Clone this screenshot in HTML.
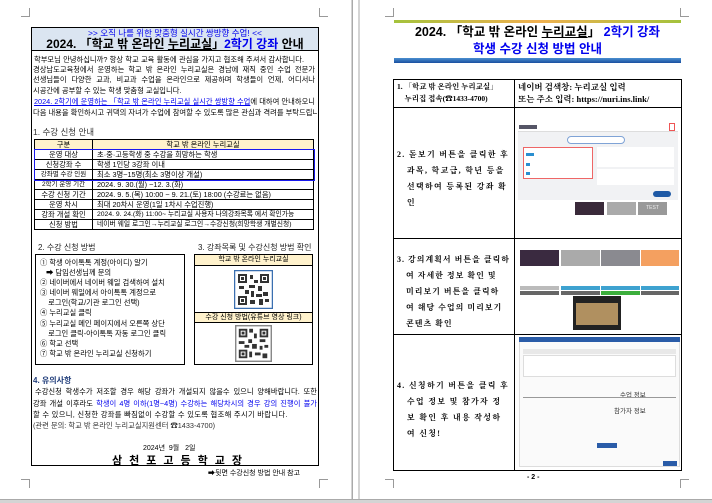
<!DOCTYPE html>
<html><head><meta charset="utf-8"><style>
*{margin:0;padding:0;box-sizing:border-box}
body{width:712px;height:503px;background:#d4d4d4;position:relative;overflow:hidden;font-family:"Liberation Sans","Noto Sans CJK KR",sans-serif;color:#000}
.a{position:absolute;white-space:nowrap}
.pg{position:absolute;background:#fff}
.cm{position:absolute;width:9px;height:9px;border-color:#999;border-style:solid;border-width:0}
.t{font-size:7.3px;line-height:10px}
.j{width:282px;text-align:justify;text-align-last:justify;white-space:nowrap;overflow:hidden}
table{border-collapse:collapse}
.t1 td{border:1px solid #000;font-size:7.3px;height:10px;padding:0 4px;white-space:nowrap;line-height:9px}
.blue{color:#0000ee}
.img{position:absolute;background:#f0f0f0}
.s{font-family:'Liberation Serif','Noto Serif CJK SC',serif}
.st{width:113px;overflow:hidden}
</style></head><body>
<div class="pg" style="left:0;top:0;width:351px;height:499px"></div>
<div class="a" style="left:352px;top:0;width:1px;height:499px;background:#aaa"></div>
<div class="pg" style="left:353px;top:0;width:5px;height:499px"></div>
<div class="pg" style="left:360px;top:0;width:352px;height:499px"></div>
<div class="a" style="left:0;top:499px;width:712px;height:1px;background:#aaa"></div>

<div class="cm" style="left:21px;top:8px;border-right-width:1px;border-bottom-width:1px"></div>
<div class="cm" style="left:319px;top:8px;border-left-width:1px;border-bottom-width:1px"></div>
<div class="cm" style="left:21px;top:479px;border-right-width:1px;border-top-width:1px"></div>
<div class="cm" style="left:319px;top:479px;border-left-width:1px;border-top-width:1px"></div>
<div class="cm" style="left:385px;top:8px;border-right-width:1px;border-bottom-width:1px"></div>
<div class="cm" style="left:680px;top:8px;border-left-width:1px;border-bottom-width:1px"></div>
<div class="cm" style="left:385px;top:479px;border-right-width:1px;border-top-width:1px"></div>
<div class="cm" style="left:680px;top:479px;border-left-width:1px;border-top-width:1px"></div>

<div class="a" style="left:31px;top:27px;width:288px;height:439px;border:1px solid #000"></div>
<div class="a" style="left:32px;top:28px;width:286px;height:23px;background:#dbe5f1;border-bottom:1px solid #000"></div>
<div class="a blue" style="left:32px;top:28px;width:286px;text-align:center;font-size:8.5px;line-height:10px">&gt;&gt; 오직 나를 위한 맞춤형 실시간 쌍방향 수업! &lt;&lt;</div>
<div class="a" style="left:32px;top:37px;width:286px;text-align:center;font-size:12px;line-height:14px;font-weight:bold">2024. 「학교 밖 온라인 <u>누리교실</u>」<span class="blue">2학기 강좌</span> 안내</div>

<div class="a t j" style="left:34px;top:55px;width:270px">학부모님 안녕하십니까? 항상 학교 교육 활동에 관심을 가지고 협조해 주셔서 감사합니다.</div>
<div class="a t j" style="left:33px;top:65px">경상남도교육청에서 운영하는 학교 밖 온라인 누리교실은 경남에 재직 중인 수업 전문가</div>
<div class="a t j" style="left:33px;top:75px">선생님들이 다양한 교과, 비교과 수업을 온라인으로 제공하며 학생들이 언제, 어디서나</div>
<div class="a t" style="left:33px;top:86px">시공간에 공부할 수 있는 학생 맞춤형 교실입니다.</div>
<div class="a t j" style="left:34px;top:97px;width:281px"><u class="blue">2024. 2학기에 운영하는 「학교 밖 온라인 누리교실 실시간 쌍방향 수업</u>에 대하여 안내하오니</div>
<div class="a t j" style="left:33px;top:108px;width:284px">다음 내용을 확인하시고 귀댁의 자녀가 수업에 참여할 수 있도록 많은 관심과 격려를 부탁드립니다.</div>

<div class="a" style="left:33px;top:127px;font-size:8.5px;line-height:11px;color:#333">1. 수강 신청 안내</div>
<table class="t1 a" style="left:34px;top:139px;width:280px">
<tr style="background:#fff2cc"><td style="width:58px;text-align:center">구분</td><td style="text-align:center">학교 밖 온라인 누리교실</td></tr>
<tr><td style="text-align:center">운영 대상</td><td>초·중·고등학생 중 수강을 희망하는 학생</td></tr>
<tr><td style="text-align:center">신청강좌 수</td><td>학생 1인당 3강좌 이내</td></tr>
<tr><td style="text-align:center;font-size:6.5px">강좌별 수강 인원</td><td>최소 3명~15명(최소 3명이상 개설)</td></tr>
<tr><td style="text-align:center;font-size:6.5px">2학기 운영 기간</td><td>2024. 9. 30.(월) ~12. 3.(화)</td></tr>
<tr><td style="text-align:center">수강 신청 기간</td><td>2024. 9. 5.(목) 10:00 ~ 9. 21.(토) 18:00 (수강료는 없음)</td></tr>
<tr><td style="text-align:center">운영 차시</td><td>최대 20차시 운영(1일 1차시 수업진행)</td></tr>
<tr><td style="text-align:center">강좌 개설 확인</td><td style="font-size:6.8px">2024. 9. 24.(화) 11:00~ 누리교실 사용자 나의강좌목록 에서 확인가능</td></tr>
<tr><td style="text-align:center">신청 방법</td><td style="font-size:6.8px">네이버 웨일 로그인→누리교실 로그인→수강신청(희망학생 개별신청)</td></tr>
</table>
<div class="a" style="left:34px;top:149px;width:281px;height:32px;border:1px solid #1a1aee"></div>

<div class="a" style="left:38px;top:242px;font-size:8px;line-height:11px;color:#222">2. 수강 신청 방법</div>
<div class="a" style="left:198px;top:242px;font-size:8px;line-height:11px;color:#222">3. 강좌목록 및 수강신청 방법 확인</div>
<div class="a" style="left:35px;top:254px;width:150px;height:111px;border:1px solid #000"></div>
<div class="a" style="left:40px;top:258px;font-size:7.3px;line-height:10.1px">① 학생 아이톡톡 계정(아이디) 알기<br>&nbsp;&nbsp;&nbsp;➡ 담임선생님께 문의<br>② 네이버에서 네이버 웨일 검색하여 설치<br>③ 네이버 웨일에서 아이톡톡 계정으로<br>&nbsp;&nbsp;&nbsp;&nbsp;로그인(학교/기관 로그인 선택)<br>④ 누리교실 클릭<br>⑤ 누리교실 메인 페이지에서 오른쪽 상단<br>&nbsp;&nbsp;&nbsp;&nbsp;로그인 클릭-아이톡톡 자동 로그인 클릭<br>⑥ 학교 선택<br>⑦ 학교 밖 온라인 누리교실 신청하기</div>
<div class="a" style="left:194px;top:254px;width:119px;height:111px;border:1px solid #000"></div>
<div class="a" style="left:195px;top:255px;width:117px;height:11px;background:#fff2cc;border-bottom:1px solid #000;font-size:7px;text-align:center;line-height:10px">학교 밖 온라인 누리교실</div>
<div class="a" style="left:195px;top:312px;width:117px;height:11px;background:#fff2cc;border-top:1px solid #000;border-bottom:1px solid #000;font-size:7px;text-align:center;line-height:10px">수강 신청 방법(유튜브 영상 링크)</div>
<svg class="a" style="left:234px;top:270px" width="39" height="39" viewBox="0 0 39 39"><rect x="0.5" y="0.5" width="38" height="38" fill="#fff" stroke="#3a6fb0" stroke-width="1.5"/><g fill="#333"><rect x="4" y="4" width="9" height="9"/><rect x="26" y="4" width="9" height="9"/><rect x="4" y="26" width="9" height="9"/><rect x="16" y="5" width="3" height="4"/><rect x="20" y="10" width="4" height="3"/><rect x="15" y="15" width="6" height="3"/><rect x="24" y="16" width="4" height="5"/><rect x="5" y="16" width="5" height="3"/><rect x="11" y="20" width="4" height="4"/><rect x="17" y="21" width="3" height="6"/><rect x="22" y="24" width="6" height="3"/><rect x="29" y="22" width="5" height="4"/><rect x="16" y="30" width="5" height="4"/><rect x="25" y="29" width="4" height="6"/><rect x="31" y="29" width="4" height="3"/></g><g fill="#fff"><rect x="6" y="6" width="5" height="5"/><rect x="28" y="6" width="5" height="5"/><rect x="6" y="28" width="5" height="5"/></g><g fill="#333"><rect x="7" y="7" width="3" height="3"/><rect x="29" y="7" width="3" height="3"/><rect x="7" y="29" width="3" height="3"/></g></svg>
<svg class="a" style="left:235px;top:325px" width="37" height="37" viewBox="0 0 39 39"><rect x="0.5" y="0.5" width="38" height="38" fill="#fff" stroke="#888" stroke-width="2"/><g fill="#333"><rect x="4" y="4" width="9" height="9"/><rect x="26" y="4" width="9" height="9"/><rect x="4" y="26" width="9" height="9"/><rect x="15" y="4" width="4" height="4"/><rect x="20" y="9" width="3" height="5"/><rect x="14" y="15" width="4" height="4"/><rect x="26" y="15" width="6" height="3"/><rect x="4" y="17" width="6" height="3"/><rect x="10" y="21" width="5" height="3"/><rect x="18" y="20" width="5" height="5"/><rect x="26" y="22" width="3" height="4"/><rect x="31" y="21" width="4" height="3"/><rect x="15" y="28" width="3" height="6"/><rect x="21" y="29" width="6" height="3"/><rect x="29" y="30" width="5" height="5"/></g><g fill="#fff"><rect x="6" y="6" width="5" height="5"/><rect x="28" y="6" width="5" height="5"/><rect x="6" y="28" width="5" height="5"/></g><g fill="#333"><rect x="7" y="7" width="3" height="3"/><rect x="29" y="7" width="3" height="3"/><rect x="7" y="29" width="3" height="3"/></g></svg>

<div class="a" style="left:33px;top:375px;font-size:8px;line-height:11px;color:#1f3c7a;font-weight:bold">4. 유의사항</div>
<div class="a t j" style="left:35px;top:387px;width:282px">수강신청 학생수가 저조할 경우 해당 강좌가 개설되지 않을수 있으니 양해바랍니다. 또한</div>
<div class="a t j" style="left:33px;top:399px;width:284px">강좌 개설 이후라도 <span class="blue">학생이 4명 이하(1명~4명) 수강하는 해당차시의 경우 강의 진행이 불가</span></div>
<div class="a t" style="left:33px;top:410px;letter-spacing:.3px">할 수 있으니, 신청한 강좌를 빠짐없이 수강할 수 있도록 협조해 주시기 바랍니다.</div>
<div class="a t" style="left:33px;top:421px;color:#333">(관련 문의: 학교 밖 온라인 누리교실지원센터 ☎1433-4700)</div>
<div class="a" style="left:143px;top:443px;font-size:7px">2024년 &nbsp;9월 &nbsp;&nbsp;2일</div>
<div class="a" style="left:112px;top:452px;font-size:11px;font-weight:bold;letter-spacing:7px">삼천포고등학교장</div>
<div class="a" style="left:208px;top:468px;font-size:7px">➡뒷면 수강신청 방법 안내 참고</div>

<div class="a" style="left:394px;top:20px;width:287px;height:3px;background:linear-gradient(90deg,#a4c23c,#f0b050,#a4c23c)"></div>
<div class="a" style="left:394px;top:25px;width:287px;text-align:center;font-size:12.5px;font-weight:bold;line-height:15px">2024. 「학교 밖 온라인 <u>누리교실</u>」 <span class="blue">2학기 강좌</span></div>
<div class="a blue" style="left:394px;top:42px;width:287px;text-align:center;font-size:12.5px;font-weight:bold;line-height:15px">학생 수강 신청 방법 안내</div>
<div class="a" style="left:394px;top:58px;width:287px;height:5px;background:linear-gradient(#4a8fd0,#1a4fa0)"></div>

<div class="a" style="left:393px;top:79px;width:289px;height:392px;border:1px solid #000"></div>
<div class="a" style="left:514px;top:79px;width:1px;height:391px;background:#000"></div>
<div class="a" style="left:393px;top:107px;width:289px;height:1px;background:#000"></div>
<div class="a" style="left:393px;top:238px;width:289px;height:1px;background:#000"></div>
<div class="a" style="left:393px;top:334px;width:289px;height:1px;background:#000"></div>

<div class="a s" style="left:397px;top:81px;font-size:7.5px;line-height:12px;font-weight:bold">1. 「학교 밖 온라인 누리교실」<br>&nbsp;&nbsp;&nbsp;&nbsp;누리집 접속(☎1433-4700)</div>
<div class="a s" style="left:518px;top:81px;font-size:8.5px;line-height:12px;font-weight:bold">네이버 검색창: 누리교실 입력<br>또는 주소 입력: https://nuri.ins.link/</div>
<div class="a s st" style="left:397px;top:147px;font-size:8px;line-height:16px;font-weight:bold;letter-spacing:1.3px">2. 돋보기 버튼을 클릭한 후<br>&nbsp;&nbsp;&nbsp;과목, 학교급, 학년 등을<br>&nbsp;&nbsp;&nbsp;선택하여 등록된 강좌 확<br>&nbsp;&nbsp;&nbsp;인</div>
<div class="a s st" style="left:397px;top:252px;font-size:8px;line-height:16px;font-weight:bold;letter-spacing:1px">3. 강의계획서 버튼을 클릭하<br>&nbsp;&nbsp;&nbsp;여 자세한 정보 확인 및<br>&nbsp;&nbsp;&nbsp;미리보기 버튼을 클릭하<br>&nbsp;&nbsp;&nbsp;여 해당 수업의 미리보기<br>&nbsp;&nbsp;&nbsp;콘텐츠 확인</div>
<div class="a s st" style="left:397px;top:378px;font-size:8px;line-height:16px;font-weight:bold;letter-spacing:1.3px">4. 신청하기 버튼을 클릭 후<br>&nbsp;&nbsp;&nbsp;수업 정보 및 참가자 정<br>&nbsp;&nbsp;&nbsp;보 확인 후 내용 작성하<br>&nbsp;&nbsp;&nbsp;여 신청!</div>

<div class="img" style="left:518px;top:130px;width:160px;height:70px;background:#f1f2f4"></div>
<div class="a" style="left:518px;top:122px;width:160px;height:10px;background:#fff;border-bottom:1px solid #ddd"></div>
<div class="a" style="left:519px;top:125px;width:18px;height:4px;background:#556"></div>
<div class="a" style="left:567px;top:136px;width:58px;height:8px;border:1px solid #7fa3d6;border-radius:5px;background:#fff"></div>
<div class="a" style="left:523px;top:147px;width:70px;height:32px;border:1px solid #e66;background:#fff"></div>
<div class="a" style="left:526px;top:153px;width:8px;height:3px;background:#2a8fd0"></div>
<div class="a" style="left:526px;top:163px;width:4px;height:3px;background:#2a8fd0"></div>
<div class="a" style="left:526px;top:172px;width:4px;height:3px;background:#2a8fd0"></div>
<div class="a" style="left:597px;top:147px;width:77px;height:20px;background:#fff"></div>
<div class="a" style="left:597px;top:169px;width:77px;height:16px;background:#fff"></div>
<div class="a" style="left:669px;top:123px;width:6px;height:8px;border:1px solid #e55"></div>
<div class="a" style="left:653px;top:191px;width:18px;height:6px;background:#1f5aa6;border-radius:3px"></div>
<div class="a" style="left:575px;top:202px;width:29px;height:13px;background:#3a2a3a"></div>
<div class="a" style="left:607px;top:202px;width:29px;height:13px;background:#aaa"></div>
<div class="a" style="left:638px;top:202px;width:29px;height:13px;background:#999;color:#eee;font-size:5px;text-align:center;line-height:13px">TEST</div>

<div class="a" style="left:520px;top:250px;width:39px;height:16px;background:#3a2a40"></div>
<div class="a" style="left:561px;top:250px;width:39px;height:16px;background:#aaa"></div>
<div class="a" style="left:601px;top:250px;width:39px;height:16px;background:#8a8a90"></div>
<div class="a" style="left:641px;top:250px;width:38px;height:16px;background:#f4a060"></div>
<div class="a" style="left:520px;top:286px;width:39px;height:4px;background:#bbb"></div>
<div class="a" style="left:561px;top:286px;width:39px;height:4px;background:#3ea2d0"></div>
<div class="a" style="left:601px;top:286px;width:39px;height:4px;background:#3ea2d0"></div>
<div class="a" style="left:641px;top:286px;width:38px;height:4px;background:#3ea2d0"></div>
<div class="a" style="left:520px;top:291px;width:39px;height:4px;background:#666"></div>
<div class="a" style="left:561px;top:291px;width:39px;height:4px;background:#666"></div>
<div class="a" style="left:601px;top:291px;width:39px;height:4px;background:#3cae3c"></div>
<div class="a" style="left:641px;top:291px;width:38px;height:4px;background:#666"></div>
<div class="a" style="left:573px;top:296px;width:48px;height:34px;background:#222"></div>
<div class="a" style="left:576px;top:303px;width:42px;height:22px;background:#b09060"></div>

<div class="a" style="left:519px;top:337px;width:161px;height:130px;background:#fafafa;border:1px solid #ddd"></div>
<div class="a" style="left:519px;top:337px;width:161px;height:5px;background:#2a5ca8"></div>
<div class="a" style="left:523px;top:349px;width:153px;height:5px;background:#e8e8e8"></div>
<div class="a" style="left:523px;top:355px;width:153px;height:22px;background:#fff;border:1px solid #ddd"></div>
<div class="a" style="left:620px;top:389px;font-size:6.5px;color:#333">수업 정보</div>
<div class="a" style="left:523px;top:397px;width:153px;height:1px;background:#999"></div>
<div class="a" style="left:614px;top:405px;font-size:6.5px;color:#333">참가자 정보</div>
<div class="a" style="left:597px;top:443px;width:20px;height:5px;background:#2a5ca8"></div>
<div class="a" style="left:663px;top:461px;width:14px;height:5px;background:#2a5ca8"></div>

<div class="a" style="left:527px;top:474px;font-size:7px;font-weight:bold">- 2 -</div>
</body></html>
